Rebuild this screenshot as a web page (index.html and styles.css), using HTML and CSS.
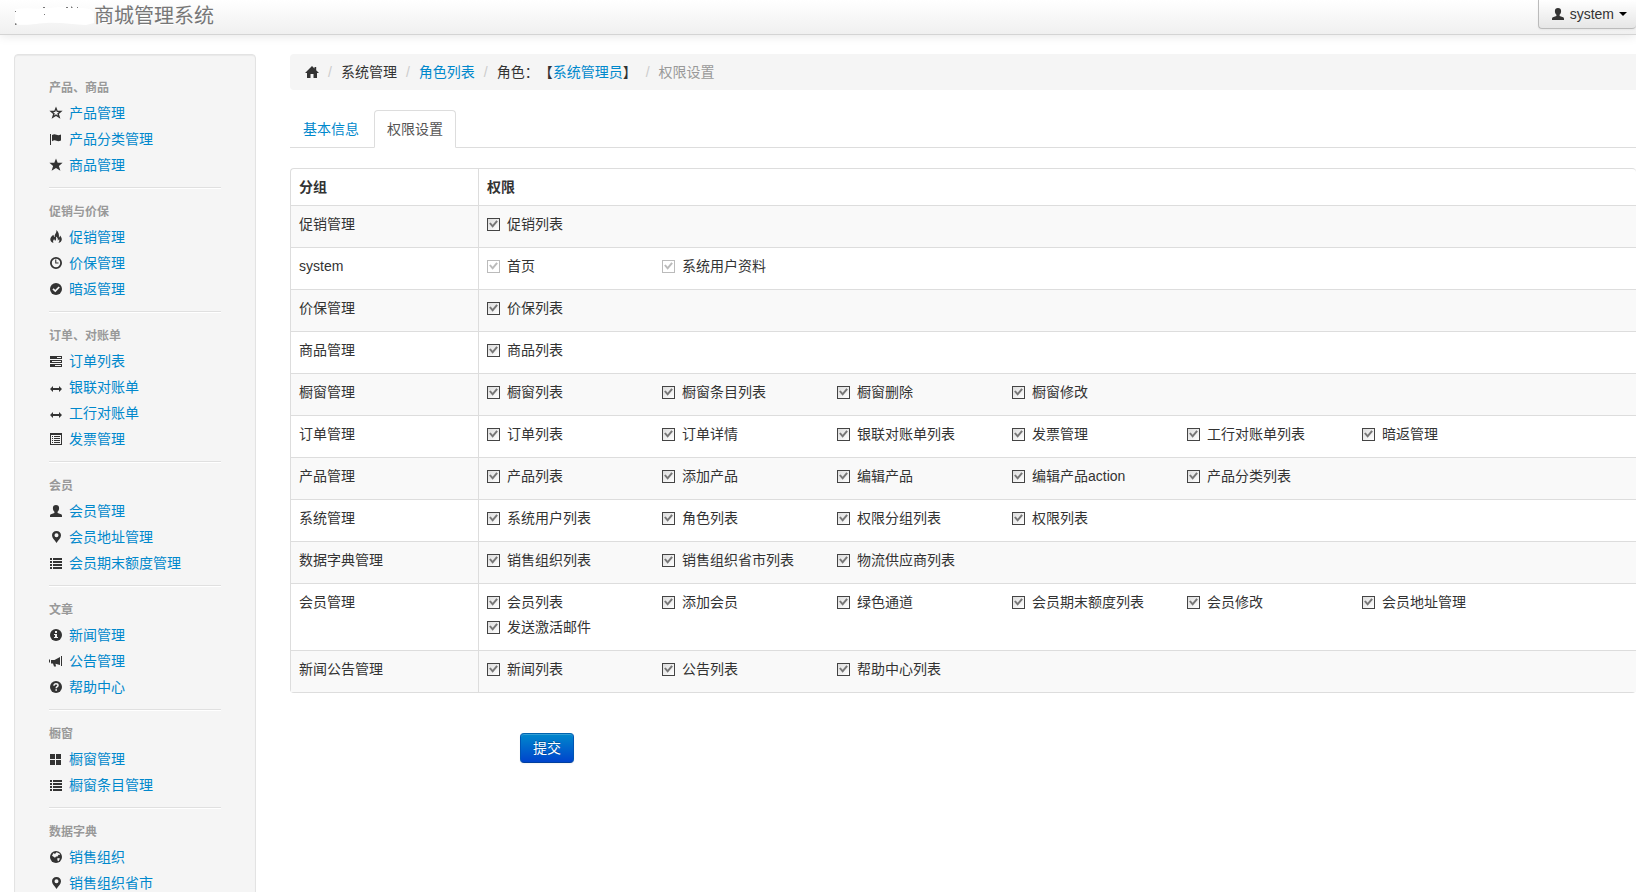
FILE: index.html
```html
<!DOCTYPE html>
<html lang="zh-CN">
<head>
<meta charset="utf-8">
<title>商城管理系统</title>
<link rel="stylesheet" href="styles.css">
</head>
<body>
<svg class="sprite" aria-hidden="true">
  <symbol id="star-o" viewBox="0 0 14 14"><path fill-rule="evenodd" d="M7 .6l1.700 4.200h4.900L9.900 7.900l1.500 4.900L7 10l-4.400 2.800 1.500-4.900L.4 4.800h4.900zM7 3.900L6.200 6H4.100l1.700 1.400-.7 2.100L7 8.200l1.900 1.300-.7-2.100L9.900 6H7.800z"/></symbol>
  <symbol id="star" viewBox="0 0 14 14"><path d="M7 .6l1.700 4.200h4.900L9.900 7.900l1.500 4.900L7 10l-4.400 2.800 1.500-4.900L.4 4.800h4.900z"/></symbol>
  <symbol id="flag" viewBox="0 0 14 14"><path d="M1 2h1v11H1zM3 3c2-1.200 3.200-.9 4.500-.2s2.500.7 4.500-.3v6c-2 1-3.200.9-4.500.3S5 8 3 9.200z"/></symbol>
  <symbol id="fire" viewBox="0 0 14 14"><path d="M7.300 0c.5 2-.5 3-1.300 4.500-.5 1-.3 1.800.1 2.500C5 6.800 4.500 6 4.500 4.800 2.500 6.200 1.200 7.800 1.300 9.500c.1 1.800 1.500 3 3.200 3.500-.8-1.500-.4-2.700.7-4 .2 1 .6 1.500 1.300 1.800 1-1.500.8-2.800.3-4.200C8.600 7.500 9.200 9 8.700 10.600c.7-.2 1.100-.7 1.300-1.500.7 1.400.4 2.700-.6 3.900 2-.5 3.400-1.800 3.400-3.700 0-1.600-.9-2.700-1.800-3.800-.1 1-.4 1.600-1.100 2C10.300 4.500 9.600 1.800 7.300 0z"/></symbol>
  <symbol id="clock" viewBox="0 0 14 14"><circle cx="7" cy="7" r="5.100" fill="none" stroke="currentColor" stroke-width="1.800"/><path d="M6.200 3.500h1.100v3H9.500v1.100H6.200z"/></symbol>
  <symbol id="ok" viewBox="0 0 14 14"><circle cx="7" cy="7" r="6"/><path d="M4 6.900l2.300 2.200L10.200 5" fill="none" stroke="#f5f5f5" stroke-width="1.800"/></symbol>
  <symbol id="tasks" viewBox="0 0 14 14"><path fill-rule="evenodd" d="M1 2h12v3H1zM8 3v1h4V3zM1 6h12v3H1zM3 7v1h9V7zM1 10h12v3H1zM6 11v1h6v-1z"/></symbol>
  <symbol id="arrows" viewBox="0 0 14 14"><path d="M1 9l3-3v2h6V6l3 3-3 3v-2H4v2z"/></symbol>
  <symbol id="list-alt" viewBox="0 0 14 14"><path fill-rule="evenodd" d="M1 1h12v12H1zM2 3v9h10V3zM3 4h1v1H3zM5 4h6v1H5zM3 6h1v1H3zM5 6h6v1H5zM3 8h1v1H3zM5 8h6v1H5zM3 10h1v1H3zM5 10h6v1H5z"/></symbol>
  <symbol id="user" viewBox="0 0 14 14"><path d="M7 1c2 0 3.100 1.100 3.100 3.100 0 1.700-.6 2.900-1.500 3.600v1.200l3.500 1.400c.6.300.9.800.9 1.400V13H1v-1.300c0-.6.300-1.100.9-1.400l3.500-1.400V7.700C4.500 7 3.900 5.800 3.900 4.100 3.900 2.100 5 1 7 1z"/></symbol>
  <symbol id="marker" viewBox="0 0 14 14"><path fill-rule="evenodd" d="M7.500 1C10.200 1 12 2.900 12 5.300c0 2.700-2.500 4.700-4.500 7.700C5.500 10 3 8 3 5.300 3 2.900 4.800 1 7.500 1zm0 2.300a2 2 0 100 4 2 2 0 000-4z"/></symbol>
  <symbol id="list" viewBox="0 0 14 14"><path d="M1 2h2v2H1zM4 2h9v2H4zM1 5h2v2H1zM4 5h9v2H4zM1 8h2v2H1zM4 8h9v2H4zM1 11h2v2H1zM4 11h9v2H4z"/></symbol>
  <symbol id="info" viewBox="0 0 14 14"><circle cx="7" cy="7" r="6"/><path fill="#f5f5f5" d="M6 3h2v2H6zM5 6h3v3h1v1H5V9h1V7H5z"/></symbol>
  <symbol id="horn" viewBox="0 0 14 14"><path d="M12 2h1v10h-1zM11 3v8L6.500 9.700 7 12.500H5L4 9.400H2v-3.400h3.500zM0 5.500h1v3H0z"/></symbol>
  <symbol id="help" viewBox="0 0 14 14"><circle cx="7" cy="7" r="6"/><path d="M5 5.700C5 4.400 5.800 3.800 7 3.800s2 .6 2 1.600C9 6.700 7.200 6.600 7.200 8.300" fill="none" stroke="#f5f5f5" stroke-width="1.500"/><path fill="#f5f5f5" d="M6.400 9.200H8v1.500H6.400z"/></symbol>
  <symbol id="grid" viewBox="0 0 14 14"><path d="M1 2h5v5H1zM7 2h5v5H7zM1 8h5v5H1zM7 8h5v5H7z"/></symbol>
  <symbol id="globe" viewBox="0 0 14 14"><circle cx="7" cy="7" r="6"/><path fill="#f5f5f5" d="M7.500 2.200l3 1.300.5 1.500-1.500-.2-1 1.600-1.500.2L6 7.700 4.200 6.500 3 5.800l1.500-2.700L6 4zM8.500 8l2.500.5-1.500 2.700-1.200-1z"/></symbol>
  <symbol id="home" viewBox="0 0 14 14"><path d="M7 1l2.500 2.500V2h1.700v3.200L14 8h-2v5H8.500V9h-3v4H2V8H0z"/></symbol>
</svg>

<header class="navbar">
  <a class="brand" href="#"><svg class="logo" viewBox="0 0 80 20" aria-hidden="true"><path fill="#fff" d="M1 3C15 1 24 4 36 2s30-1 40 1l4 4v10l-8 2c-12 0-26-3-40-2S10 20 1 18z"/><path fill="#777" d="M1 5h1v1H1zM1 17l2 1-1 1H1zM29 1h2v1h-2zM30 8h1v1h-1zM52 1h2v1h-2zM57 0l2 2h-2zM63 1h1v1h-1z"/></svg>商城管理系统</a>
  <button class="btn user-menu" type="button"><svg class="icon"><use href="#user"/></svg>system<span class="caret"></span></button>
</header>

<div class="page">
  <nav class="sidebar">
    <section class="nav-group">
      <h2>产品、商品</h2>
      <a href="#"><svg class="icon"><use href="#star-o"/></svg>产品管理</a>
      <a href="#"><svg class="icon"><use href="#flag"/></svg>产品分类管理</a>
      <a href="#"><svg class="icon"><use href="#star"/></svg>商品管理</a>
    </section>
    <section class="nav-group">
      <h2>促销与价保</h2>
      <a href="#"><svg class="icon"><use href="#fire"/></svg>促销管理</a>
      <a href="#"><svg class="icon"><use href="#clock"/></svg>价保管理</a>
      <a href="#"><svg class="icon"><use href="#ok"/></svg>暗返管理</a>
    </section>
    <section class="nav-group">
      <h2>订单、对账单</h2>
      <a href="#"><svg class="icon"><use href="#tasks"/></svg>订单列表</a>
      <a href="#"><svg class="icon"><use href="#arrows"/></svg>银联对账单</a>
      <a href="#"><svg class="icon"><use href="#arrows"/></svg>工行对账单</a>
      <a href="#"><svg class="icon"><use href="#list-alt"/></svg>发票管理</a>
    </section>
    <section class="nav-group">
      <h2>会员</h2>
      <a href="#"><svg class="icon"><use href="#user"/></svg>会员管理</a>
      <a href="#"><svg class="icon"><use href="#marker"/></svg>会员地址管理</a>
      <a href="#"><svg class="icon"><use href="#list"/></svg>会员期末额度管理</a>
    </section>
    <section class="nav-group">
      <h2>文章</h2>
      <a href="#"><svg class="icon"><use href="#info"/></svg>新闻管理</a>
      <a href="#"><svg class="icon"><use href="#horn"/></svg>公告管理</a>
      <a href="#"><svg class="icon"><use href="#help"/></svg>帮助中心</a>
    </section>
    <section class="nav-group">
      <h2>橱窗</h2>
      <a href="#"><svg class="icon"><use href="#grid"/></svg>橱窗管理</a>
      <a href="#"><svg class="icon"><use href="#list"/></svg>橱窗条目管理</a>
    </section>
    <section class="nav-group">
      <h2>数据字典</h2>
      <a href="#"><svg class="icon"><use href="#globe"/></svg>销售组织</a>
      <a href="#"><svg class="icon"><use href="#marker"/></svg>销售组织省市</a>
    </section>
  </nav>

  <main class="content">
    <ol class="breadcrumb">
      <li><a class="home" href="#" aria-label="首页"><svg class="icon"><use href="#home"/></svg></a></li>
      <li>系统管理</li>
      <li><a href="#">角色列表</a></li>
      <li>角色：【<a href="#">系统管理员</a>】</li>
      <li class="current">权限设置</li>
    </ol>

    <div class="tabs">
      <a href="#">基本信息</a>
      <a class="active" href="#">权限设置</a>
    </div>

    <form>
      <table class="perms">
        <thead><tr><th class="group">分组</th><th>权限</th></tr></thead>
        <tbody>
          <tr><td>促销管理</td><td><div class="options">
            <label><input type="checkbox" checked>促销列表</label>
          </div></td></tr>
          <tr><td>system</td><td><div class="options">
            <label><input type="checkbox" checked disabled>首页</label>
            <label><input type="checkbox" checked disabled>系统用户资料</label>
          </div></td></tr>
          <tr><td>价保管理</td><td><div class="options">
            <label><input type="checkbox" checked>价保列表</label>
          </div></td></tr>
          <tr><td>商品管理</td><td><div class="options">
            <label><input type="checkbox" checked>商品列表</label>
          </div></td></tr>
          <tr><td>橱窗管理</td><td><div class="options">
            <label><input type="checkbox" checked>橱窗列表</label>
            <label><input type="checkbox" checked>橱窗条目列表</label>
            <label><input type="checkbox" checked>橱窗删除</label>
            <label><input type="checkbox" checked>橱窗修改</label>
          </div></td></tr>
          <tr><td>订单管理</td><td><div class="options">
            <label><input type="checkbox" checked>订单列表</label>
            <label><input type="checkbox" checked>订单详情</label>
            <label><input type="checkbox" checked>银联对账单列表</label>
            <label><input type="checkbox" checked>发票管理</label>
            <label><input type="checkbox" checked>工行对账单列表</label>
            <label><input type="checkbox" checked>暗返管理</label>
          </div></td></tr>
          <tr><td>产品管理</td><td><div class="options">
            <label><input type="checkbox" checked>产品列表</label>
            <label><input type="checkbox" checked>添加产品</label>
            <label><input type="checkbox" checked>编辑产品</label>
            <label><input type="checkbox" checked>编辑产品action</label>
            <label><input type="checkbox" checked>产品分类列表</label>
          </div></td></tr>
          <tr><td>系统管理</td><td><div class="options">
            <label><input type="checkbox" checked>系统用户列表</label>
            <label><input type="checkbox" checked>角色列表</label>
            <label><input type="checkbox" checked>权限分组列表</label>
            <label><input type="checkbox" checked>权限列表</label>
          </div></td></tr>
          <tr><td>数据字典管理</td><td><div class="options">
            <label><input type="checkbox" checked>销售组织列表</label>
            <label><input type="checkbox" checked>销售组织省市列表</label>
            <label><input type="checkbox" checked>物流供应商列表</label>
          </div></td></tr>
          <tr><td>会员管理</td><td><div class="options">
            <label><input type="checkbox" checked>会员列表</label>
            <label><input type="checkbox" checked>添加会员</label>
            <label><input type="checkbox" checked>绿色通道</label>
            <label><input type="checkbox" checked>会员期末额度列表</label>
            <label><input type="checkbox" checked>会员修改</label>
            <label><input type="checkbox" checked>会员地址管理</label>
            <label><input type="checkbox" checked>发送激活邮件</label>
          </div></td></tr>
          <tr><td>新闻公告管理</td><td><div class="options">
            <label><input type="checkbox" checked>新闻列表</label>
            <label><input type="checkbox" checked>公告列表</label>
            <label><input type="checkbox" checked>帮助中心列表</label>
          </div></td></tr>
        </tbody>
      </table>
      <div class="actions"><button class="btn primary" type="submit">提交</button></div>
    </form>
  </main>
</div>
</body>
</html>
```
FILE: styles.css
```css
*, *::before, *::after { box-sizing: border-box; }

html { scrollbar-width: none; }

body {
  margin: 0;
  background: #fff;
  color: #333;
  font: 14px/20px "Liberation Sans", "Noto Sans CJK SC", sans-serif;
  text-spacing-trim: space-all;
}

a { color: #08c; text-decoration: none; }

.sprite { display: none; }

.icon {
  flex: none;
  width: 14px;
  height: 14px;
  color: #333;
  fill: currentColor;
}

/* Top bar */
.navbar {
  display: flex;
  justify-content: space-between;
  align-items: flex-start;
  height: 35px;
  padding-left: 14px;
  border-bottom: 1px solid #d4d4d4;
  background: linear-gradient(#fff, #f0f0f0);
  box-shadow: 0 1px 10px rgba(0, 0, 0, .1);
}

.brand {
  display: flex;
  align-items: center;
  height: 32px;
  color: #777;
  font-size: 20px;
  text-shadow: 0 1px 0 #fff;
}

.logo { width: 80px; height: 20px; }

.btn {
  display: inline-flex;
  align-items: center;
  height: 30px;
  padding: 0 12px;
  border: 1px solid #bbb;
  border-radius: 4px;
  color: #333;
  font: inherit;
  background: linear-gradient(#fff, #e6e6e6);
  box-shadow: inset 0 1px 0 rgba(255, 255, 255, .2), 0 1px 2px rgba(0, 0, 0, .05);
}

.user-menu {
  gap: 5px;
  height: 29px;
  padding-right: 9px;
  border-width: 0 0 1px 1px;
  border-color: #bbb;
  border-radius: 0 0 4px 4px;
}

.caret {
  border: 4px solid transparent;
  border-top-color: #000;
  border-bottom: 0;
}

/* Page columns */
.page {
  display: flex;
  align-items: flex-start;
  gap: 34px;
  padding: 19px 0 0 14px;
}

.sidebar {
  flex: none;
  width: 242px;
  padding: 19px 34px;
  border: 1px solid #e3e3e3;
  border-radius: 4px;
  background: #f5f5f5;
  box-shadow: inset 0 1px 1px rgba(0, 0, 0, .05);
}

.nav-group + .nav-group::before {
  content: "";
  display: block;
  height: 2px;
  margin: 9px 0;
  border-bottom: 1px solid #fff;
  background: #e0e0e0;
}

.nav-group h2 {
  margin: 0;
  padding-top: 2px;
  color: #999;
  font-size: 12px;
  line-height: 24px;
  text-shadow: 0 1px 0 rgba(255, 255, 255, .5);
}

.nav-group a {
  display: flex;
  align-items: center;
  gap: 6px;
  height: 26px;
}

.content { flex: 1; min-width: 0; }

.breadcrumb {
  display: flex;
  flex-wrap: wrap;
  margin: 0 0 20px;
  padding: 8px 15px;
  border-radius: 4px 0 0 4px;
  background: #f5f5f5;
  list-style: none;
}

.breadcrumb li + li::before {
  content: "/";
  padding: 0 9px;
  color: #ccc;
}

.breadcrumb .current { color: #999; }

.breadcrumb li:first-child { display: flex; }

.home { display: flex; align-items: center; height: 20px; }

.tabs {
  display: flex;
  gap: 2px;
  margin-bottom: 20px;
  border-bottom: 1px solid #ddd;
}

.tabs a {
  margin-bottom: -1px;
  padding: 8px 12px;
  border: 1px solid transparent;
  border-radius: 4px 4px 0 0;
}

.tabs .active {
  border-color: #ddd #ddd #fff;
  background: #fff;
  color: #555;
}

/* Permission table */
.perms {
  width: 100%;
  border: 1px solid #ddd;
  border-right: 0;
  border-radius: 4px;
  border-spacing: 0;
}

.perms th,
.perms td {
  padding: 8px;
  text-align: left;
  vertical-align: top;
}

.perms .group { width: 187px; }
.perms td { border-top: 1px solid #ddd; }
.perms th + th,
.perms td + td { border-left: 1px solid #ddd; }
.perms tbody tr:nth-child(odd) { background: #f9f9f9; }

.options { display: flex; flex-wrap: wrap; }

.options label {
  display: flex;
  align-items: center;
  gap: 7px;
  width: 175px;
  margin-bottom: 5px;
}

.options input {
  flex: none;
  width: 13px;
  height: 13px;
  margin: 0;
  appearance: none;
  border: 1px solid #444;
  background: linear-gradient(135deg, #ddd, #fff);
}

.options input:checked::before {
  content: "";
  display: block;
  width: 11px;
  height: 11px;
  background: #777;
  clip-path: polygon(10% 45%, 24% 36%, 42% 56%, 76% 16%, 90% 28%, 42% 84%);
}

.options input:disabled { border-color: #bbb; background: #fff; }
.options input:disabled::before { background: #bbb; }

.actions { padding: 40px 0 40px 230px; }

.primary {
  border-color: #0064b0 #0055b3 #003f9e;
  color: #fff;
  background: linear-gradient(#08c, #04c);
  text-shadow: 0 -1px 0 rgba(0, 0, 0, .25);
}
```
